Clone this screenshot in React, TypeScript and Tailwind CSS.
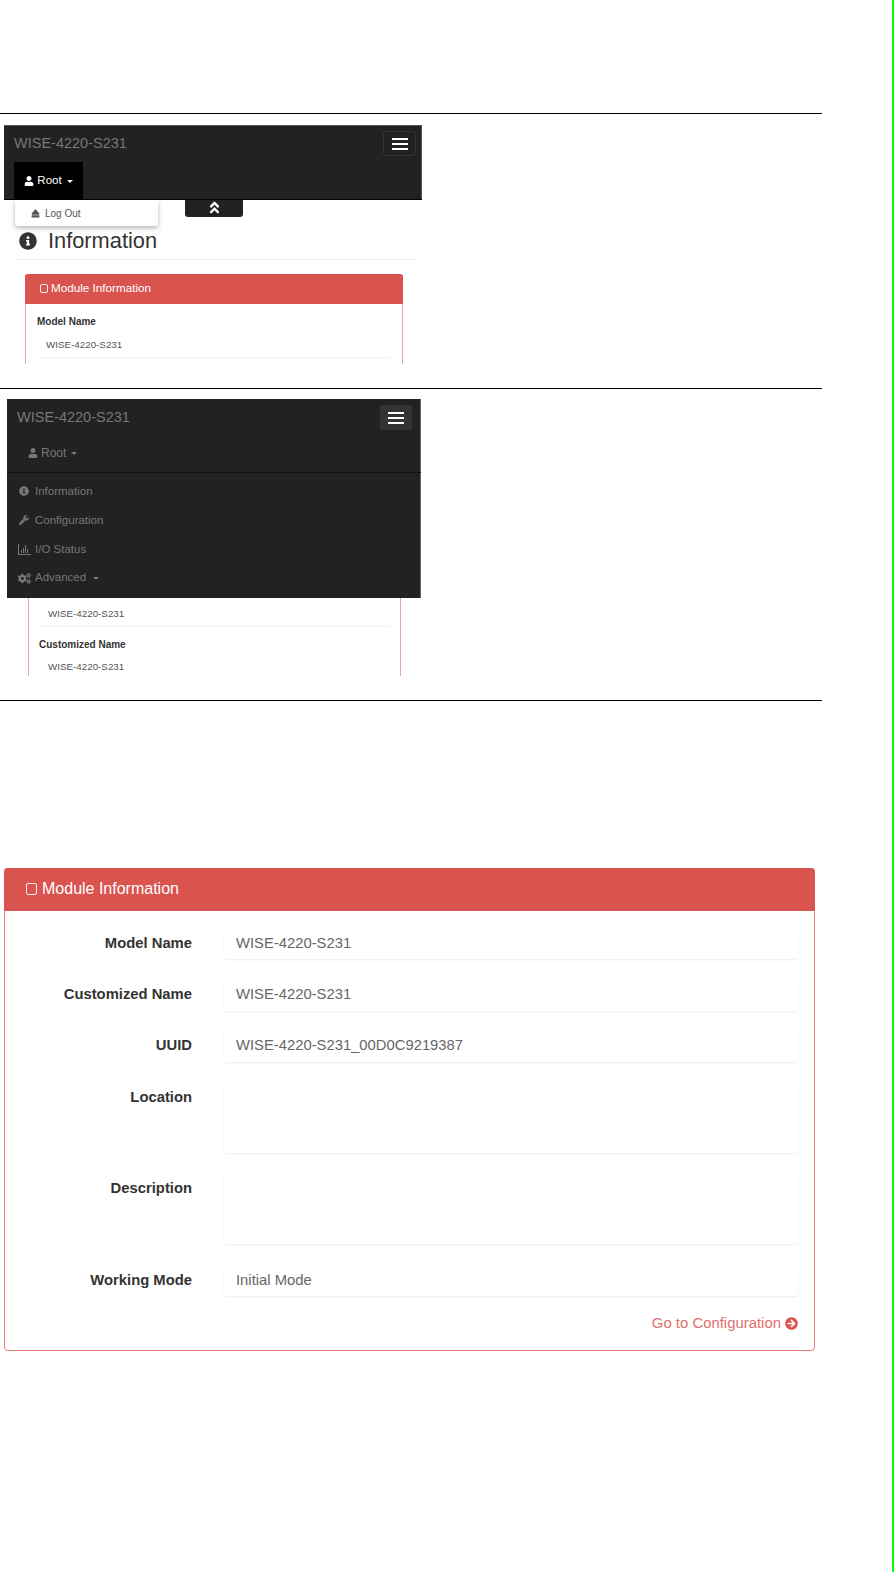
import React from 'react';
import { FaUser, FaInfoCircle, FaWrench, FaCogs, FaEject, FaAngleDoubleUp, FaArrowCircleRight } from 'react-icons/fa';

const ModuleIcon: React.FC<{ className: string }> = ({ className }) => (
  <span className={`inline-block rounded-[2px] border-white/90 ${className}`} />
);

const BarsIcon = () => (
  <svg width="13" height="11" viewBox="0 0 13 11" className="text-[#777]" fill="currentColor">
    <rect x="0" y="0" width="1" height="11" />
    <rect x="0" y="10" width="13" height="1" />
    <rect x="3" y="6" width="1" height="3" />
    <rect x="5" y="4" width="1" height="5" />
    <rect x="7" y="1" width="1" height="8" />
    <rect x="9" y="5" width="1" height="4" />
  </svg>
);

const Caret = ({ color = 'border-t-[#777]', gap = 'ml-[5px]' }: { color?: string; gap?: string }) => (
  <span className={`${gap} inline-block h-0 w-0 border-x-[3px] border-t-[3px] border-x-transparent ${color}`} />
);

const HamburgerLines = () => (
  <span className="flex flex-col gap-[3px]">
    <span className="block h-[2px] w-[16px] bg-white" />
    <span className="block h-[2px] w-[16px] bg-white" />
    <span className="block h-[2px] w-[16px] bg-white" />
  </span>
);

const MiniField = ({ value }: { value: string }) => (
  <div className="flex h-[24px] items-center rounded-[2px] pl-[9px] text-[9.8px] text-[#555] shadow-[0_1px_1px_rgba(0,0,0,0.06)]">
    {value}
  </div>
);

const sideLinks = [
  { icon: <FaInfoCircle size={10} className="ml-[1px] mr-[6px]" />, label: 'Information' },
  { icon: <FaWrench size={10} className="ml-[1px] mr-[6px]" />, label: 'Configuration' },
  { icon: <span className="mr-[4px]"><BarsIcon /></span>, label: 'I/O Status' },
  { icon: <FaCogs size={13} className="mr-[4px]" />, label: 'Advanced' }
];

const rows = [
  { label: 'Model Name', value: 'WISE-4220-S231', h: 'h-[32px]', mt: 'mt-[16px]' },
  { label: 'Customized Name', value: 'WISE-4220-S231', h: 'h-[33px]', mt: 'mt-[19px]' },
  { label: 'UUID', value: 'WISE-4220-S231_00D0C9219387', h: 'h-[33px]', mt: 'mt-[18px]' },
  { label: 'Location', value: '', h: 'h-[72px]', mt: 'mt-[19px]' },
  { label: 'Description', value: '', h: 'h-[72px]', mt: 'mt-[19px]' },
  { label: 'Working Mode', value: 'Initial Mode', h: 'h-[32px]', mt: 'mt-[20px]' }
];

export default function App() {
  return (
    <div className="relative h-[1572px] w-[894px] overflow-hidden bg-white font-['Liberation_Sans',Arial,sans-serif] text-[#333]">
      {/* Green page edge */}
      <div className="absolute right-0 top-0 h-full w-[2px] bg-[#00ff00]" />

      <div className="w-[822px] pt-[113px]">
        {/* First shot: user menu open */}
        <div className="h-[275px] border-t border-black pt-[11px]">
          <div className="relative ml-[4px] h-[239px] w-[418px] overflow-hidden">
            <div className="h-[75px] border-b border-black bg-[#222] shadow-[inset_-1px_1px_0_#555]">
              <div className="flex h-[37px] items-center justify-between pl-[10px] pr-[6px]">
                <span className="text-[14.5px] text-[#777]">WISE-4220-S231</span>
                <button className="flex h-[25px] w-[33px] items-center justify-center rounded-[3px] border border-[#333]">
                  <HamburgerLines />
                </button>
              </div>
              <div className="ml-[10px] flex h-[38px] w-[69px] items-center justify-center bg-black text-[11.5px] text-white">
                <FaUser size={10} className="mr-[3px]" />
                Root
                <Caret color="border-t-white" />
              </div>
            </div>

            {/* Dropdown and collapse tab lie over the page */}
            <div className="absolute left-[11px] top-[75px] z-10 flex h-[26px] w-[143px] items-center rounded-b-[3px] bg-white pl-[16px] text-[10px] text-[#555] shadow-[0_2px_5px_rgba(0,0,0,0.3)]">
              <FaEject size={9} className="mr-[5px]" />
              Log Out
            </div>
            <div className="absolute left-[181px] top-[75px] flex h-[17px] w-[58px] items-start justify-center rounded-b-[3px] bg-[#222] text-white">
              <FaAngleDoubleUp size={15} />
            </div>

            <div className="mx-[10px] mt-[29px] flex h-[31px] w-[400px] items-center border-b border-[#eee] pb-[7px] pl-[5px] text-[21.8px] leading-none">
              <FaInfoCircle size={18} className="mr-[11px]" />
              Information
            </div>

            <div className="ml-[21px] mt-[14px] w-[378px] rounded-t-[3px] border-x border-[#f0a5a3]">
              <div className="-mx-px flex h-[30px] items-center rounded-t-[3px] bg-[#d9534f] pb-[2px] pl-[15px] text-[11.7px] text-white">
                <ModuleIcon className="h-[9px] w-[8px] border" />
                <span className="ml-[3px]">Module Information</span>
              </div>
              <div className="px-[11px] pt-[12px]">
                <div className="text-[10px] font-bold leading-[12px]">Model Name</div>
                <div className="mt-[5px]">
                  <MiniField value="WISE-4220-S231" />
                </div>
              </div>
              <div className="h-[12px]" />
            </div>
          </div>
        </div>

        {/* Second shot: nav menu expanded */}
        <div className="h-[312px] border-t border-black pt-[10px]">
          <div className="ml-[7px] h-[277px] w-[414px] overflow-hidden">
            <div className="h-[199px] bg-[#222] shadow-[inset_-1px_0_0_#666]">
              <div className="flex h-[37px] items-center justify-between pl-[10px] pr-[9px]">
                <span className="text-[14.5px] text-[#777]">WISE-4220-S231</span>
                <button className="flex h-[25px] w-[32px] items-center justify-center rounded-[3px] bg-[#333]">
                  <HamburgerLines />
                </button>
              </div>
              <div className="flex h-[37px] items-center border-b border-[#111] pb-[2px] pl-[21px] text-[12px] text-[#777]">
                <FaUser size={10} className="mr-[3px]" />
                Root
                <Caret />
              </div>
              <div className="flex flex-col pt-[4px] text-[11.5px] text-[#777]">
                {sideLinks.map((link) => (
                  <div key={link.label} className="flex h-[28.9px] items-center pl-[11px]">
                    {link.icon}
                    {link.label}
                    {link.label === 'Advanced' && <Caret gap="ml-[7px]" />}
                  </div>
                ))}
              </div>
            </div>
            <div className="ml-[21px] w-[373px] border-x border-[#f0a5a3] px-[10px] pt-[4px]">
              <MiniField value="WISE-4220-S231" />
              <div className="mt-[13px] text-[10px] font-bold leading-[12px]">Customized Name</div>
              <div className="mt-[4px]">
                <MiniField value="WISE-4220-S231" />
              </div>
            </div>
          </div>
        </div>
        <div className="border-t border-black" />
      </div>

      {/* Full size panel */}
      <div className="ml-[4px] mt-[167px] h-[483px] w-[811px] rounded-[4px] border border-[#ee7a76]">
        <div className="-mx-px -mt-px flex h-[43px] items-center rounded-t-[4px] bg-[#d9534f] pb-[2px] pl-[22px] text-[16px] text-white">
          <ModuleIcon className="h-[12px] w-[11px] border-[1.5px]" />
          <span className="ml-[5px]">Module Information</span>
        </div>
        {rows.map((row) => (
          <div key={row.label} className={`flex ${row.mt}`}>
            <div className="w-[187px] shrink-0 pt-[7px] text-right text-[14.8px] font-bold leading-[18px] text-[#333]">
              {row.label}
            </div>
            <div
              className={`ml-[32px] flex w-[574px] items-start rounded-[3px] pl-[12px] pt-[7px] text-[14.8px] leading-[18px] text-[#666] shadow-[0_1px_2px_rgba(0,0,0,0.08)] ${row.h}`}
            >
              {row.value}
            </div>
          </div>
        ))}
        <div className="mr-[16px] mt-[18px] flex items-center justify-end text-[14.9px] leading-[18px] text-[#e0706c]">
          Go to Configuration
          <FaArrowCircleRight size={13} className="ml-[4px] text-[#d9534f]" />
        </div>
      </div>
    </div>
  );
}
